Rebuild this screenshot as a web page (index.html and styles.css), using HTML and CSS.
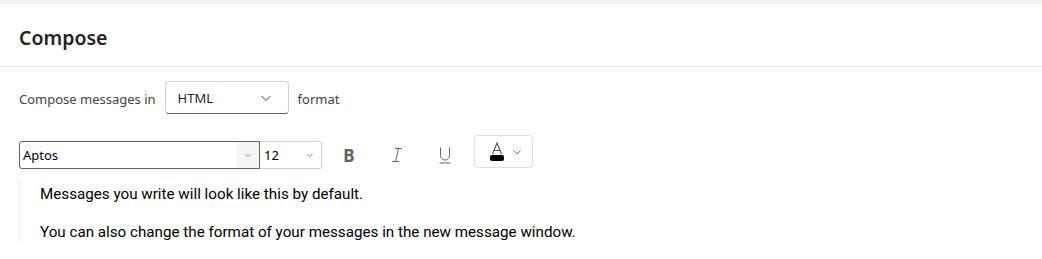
FILE: index.html
```html
<!DOCTYPE html>
<html lang="en">
<head>
    <meta charset="UTF-8">
    <title>Compose</title>
    <link rel="stylesheet" href="styles.css">
</head>
<body>
    <div class="topbar"></div>
    <div class="header">
        <h1>Compose</h1>
    </div>

    <div class="section">
        <div class="format-row">
            <span>Compose messages in</span>
            <div class="dropdown">
                <span>HTML</span>
                <svg width="12" height="12" viewBox="0 0 12 12"><path d="M1.5 4 L6 8.5 L10.5 4" fill="none" stroke="#424242" stroke-width="1"/></svg>
            </div>
            <span>format</span>
        </div>

        <div class="toolbar">
            <div class="font-box">
                <span class="font-name">Aptos</span>
                <span class="font-chev">
                    <svg width="8" height="8" viewBox="0 0 8 8"><path d="M1.5 3 L4 5.5 L6.5 3" fill="none" stroke="#777" stroke-width="0.9"/></svg>
                </span>
            </div>
            <div class="size-box">
                <span>12</span>
                <svg width="8" height="8" viewBox="0 0 8 8"><path d="M1.5 3 L4 5.5 L6.5 3" fill="none" stroke="#777" stroke-width="0.9"/></svg>
            </div>
            <div class="tool bold">B</div>
            <div class="tool">
                <svg width="18" height="18" viewBox="0 0 18 18"><path d="M7 2.5 H14 M4 15.5 H11 M10.5 2.5 L7.5 15.5" fill="none" stroke="#666" stroke-width="1"/></svg>
            </div>
            <div class="tool">
                <svg width="18" height="18" viewBox="0 0 18 18"><path d="M4.5 1.5 V9.5 A4.5 4.5 0 0 0 13.5 9.5 V1.5 M3.5 17 H14.5" fill="none" stroke="#666" stroke-width="1"/></svg>
            </div>
            <div class="color-btn">
                <svg width="22" height="24" viewBox="0 0 22 24">
                    <path d="M6.5 14 L11 3 L15.5 14 M8 10.5 H14" fill="none" stroke="#555" stroke-width="1.1"/>
                    <rect x="4" y="15" width="14" height="6" rx="2" fill="#000"/>
                </svg>
                <svg width="10" height="10" viewBox="0 0 10 10"><path d="M1.5 3.5 L5 7 L8.5 3.5" fill="none" stroke="#4a7fc1" stroke-width="1"/></svg>
            </div>
        </div>

        <div class="preview">
            <p>Messages you write will look like this by default.</p>
            <p>You can also change the format of your messages in the new message window.</p>
        </div>
    </div>
</body>
</html>
```

FILE: styles.css
```css
body {
    margin: 0;
    font-family: "Noto Sans", "Open Sans", Arial, sans-serif;
    color: #242424;
    background: #ffffff;
}
.topbar {
    height: 4px;
    background: #eef7e9;
}
.header {
    box-sizing: border-box;
    height: 63px;
    padding: 4px 19px 0;
    border-bottom: 1px solid #ebebeb;
    display: flex;
    align-items: center;
}
.header h1 {
    margin: 0;
    font-size: 19.5px;
    font-weight: 600;
    color: #242424;
}
.section {
    padding: 0 19px;
}
.format-row {
    display: flex;
    align-items: center;
    gap: 9px;
    margin-top: 14px;
    font-size: 13px;
    color: #424242;
}
.format-row > span {
    padding-top: 3px;
}
.dropdown {
    box-sizing: border-box;
    width: 124px;
    height: 33px;
    border: 1px solid #d1d1d1;
    border-bottom-color: #616161;
    border-radius: 4px;
    display: flex;
    align-items: center;
    justify-content: space-between;
    padding: 0 16px 0 12px;
    color: #242424;
}
.dropdown span {
    padding-top: 0;
}
.toolbar {
    display: flex;
    align-items: flex-start;
    margin-top: 21px;
    height: 33px;
}
.font-box {
    box-sizing: border-box;
    width: 241px;
    height: 28px;
    margin-top: 6px;
    border: 1px solid #616161;
    border-radius: 3px 0 0 3px;
    display: flex;
    align-items: stretch;
    font-size: 13px;
    color: #000;
}
.font-name {
    flex: 1;
    display: flex;
    align-items: center;
    padding-left: 3px;
}
.font-chev {
    width: 22px;
    background: #f5f5f5;
    display: flex;
    align-items: center;
    justify-content: center;
}
.size-box {
    box-sizing: border-box;
    width: 62px;
    height: 28px;
    margin-top: 6px;
    border: 1px solid #d1d1d1;
    border-left: none;
    border-radius: 0 3px 3px 0;
    display: flex;
    align-items: center;
    justify-content: space-between;
    padding: 0 7px 0 4px;
    font-size: 13px;
    color: #000;
}
.tool {
    width: 48px;
    height: 28px;
    margin-top: 6px;
    display: flex;
    align-items: center;
    justify-content: center;
    color: #616161;
    font-size: 17px;
}
.tool.bold {
    font-weight: 700;
    margin-left: 3px;
}
.color-btn {
    box-sizing: border-box;
    width: 59px;
    height: 33px;
    margin-left: 5px;
    border: 1px solid #e0e0e0;
    border-radius: 3px;
    display: flex;
    align-items: center;
    justify-content: center;
    gap: 4px;
}
.preview {
    margin-top: 12px;
    border-left: 1px solid #ebebeb;
    padding: 4px 0 0 20px;
    font-family: "Roboto", Arial, sans-serif;
    font-size: 15.2px;
    color: #000;
}
.preview p {
    margin: 0 0 18px;
    line-height: 20px;
}
.preview p:last-child {
    margin-bottom: 0;
}
```
